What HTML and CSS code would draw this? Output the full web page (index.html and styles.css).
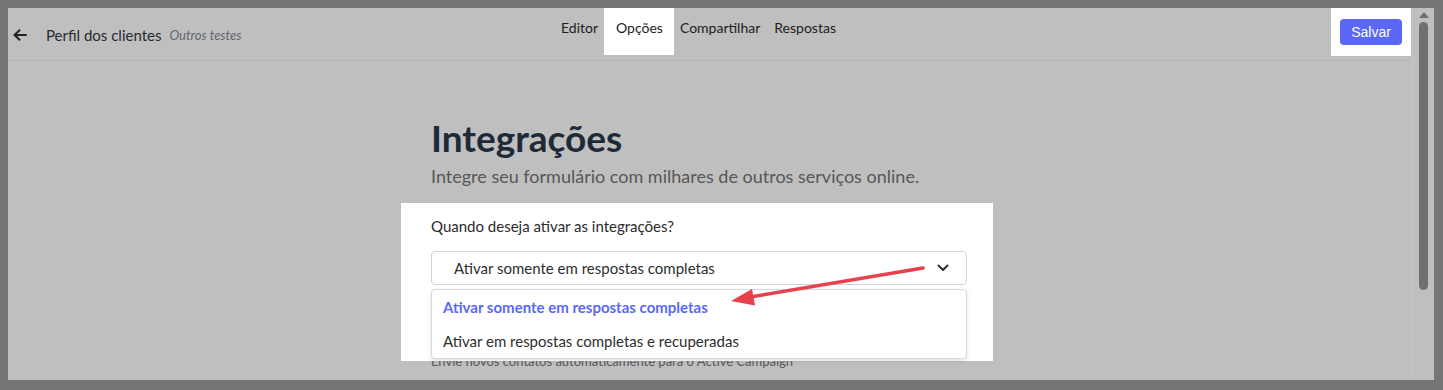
FILE: index.html
```html
<!DOCTYPE html>
<html lang="pt-BR">
<head>
    <meta charset="UTF-8">
    <meta name="viewport" content="width=device-width, initial-scale=1.0">
    <title>Integrações - Perfil dos clientes</title>
    <link rel="stylesheet" href="styles.css">
</head>
<body>
    <div class="frame">
        <div class="app">
            <header class="topbar">
                <div class="crumbs">
                    <svg class="back" width="14" height="12" viewBox="0 0 14 12">
                        <path d="M13 6H1.8M6.5 1.2L1.5 6l5 4.8" fill="none" stroke="#222" stroke-width="2" stroke-linecap="round" stroke-linejoin="round"/>
                    </svg>
                    <span class="form-name">Perfil dos clientes</span>
                    <span class="workspace">Outros testes</span>
                </div>
                <nav class="tabs">
                    <a class="tab">Editor</a>
                    <a class="tab active">Opções</a>
                    <a class="tab">Compartilhar</a>
                    <a class="tab">Respostas</a>
                </nav>
                <div class="actions">
                    <div class="save-spot">
                        <button class="save">Salvar</button>
                    </div>
                </div>
            </header>

            <main class="settings">
                <h1>Integrações</h1>
                <p class="lead">Integre seu formulário com milhares de outros serviços online.</p>

                <div class="spot">
                    <label class="field-label">Quando deseja ativar as integrações?</label>
                    <div class="select">
                        <span>Ativar somente em respostas completas</span>
                        <svg width="12" height="8" viewBox="0 0 12 8">
                            <path d="M1.5 1.5L6 6l4.5-4.5" fill="none" stroke="#333" stroke-width="2" stroke-linecap="round" stroke-linejoin="round"/>
                        </svg>
                    </div>
                    <ul class="menu">
                        <li class="selected">Ativar somente em respostas completas</li>
                        <li>Ativar em respostas completas e recuperadas</li>
                    </ul>
                    <!-- annotation arrow -->
                    <svg class="pointer" width="200" height="50" viewBox="0 0 200 50">
                        <path d="M195 8L22 37" fill="none" stroke="#e8414b" stroke-width="3.5" stroke-linecap="round"/>
                        <path d="M3 41L24 29L27 45.5Z" fill="#e8414b"/>
                    </svg>
                </div>

                <div class="integration-row">
                    <span>Envie novos contatos automaticamente para o Active Campaign</span>
                    <span class="row-btn"></span>
                </div>
            </main>
        </div>
        <div class="scrollbar">
            <span class="scroll-up"></span>
            <span class="thumb"></span>
        </div>
    </div>
</body>
</html>
```

FILE: styles.css
```css
body {
    margin: 0;
    font-family: 'Lato', 'Noto Sans', Arial, sans-serif;
    color: #262626;
    background-color: #757575;
}
.frame {
    display: flex;
    height: 372px;
    border-style: solid;
    border-color: #757575;
    border-width: 8px 9px 10px 8px;
    background-color: #bfbfbf;
    overflow: hidden;
}
.app {
    flex: 1;
    display: flex;
    flex-direction: column;
}

/* Top bar */
.topbar {
    display: grid;
    grid-template-columns: 1fr auto 1fr;
    height: 52px;
    border-bottom: 1px solid #b4b4b4;
}
.crumbs {
    display: flex;
    align-items: center;
    padding-left: 5px;
    padding-top: 1px;
}
.back {
    margin-right: 19px;
}
.form-name {
    font-size: 15px;
    color: #262b31;
    margin-right: 8px;
}
.workspace {
    font-size: 13px;
    font-style: italic;
    color: #5f6670;
}
.tabs {
    display: flex;
    align-items: flex-start;
    margin-right: 23px;
}
.tab {
    padding: 0 6px;
    height: 47px;
    line-height: 40px;
    font-size: 14px;
    color: #1c1c1c;
    cursor: pointer;
}
.tab.active {
    padding: 0 11px 0 12px;
    background-color: #fff;
}
.tab:last-child {
    margin-left: 2px;
}
.actions {
    display: flex;
    justify-content: flex-end;
    align-items: flex-start;
    padding-right: 1px;
}
.save-spot {
    padding: 11px 9px;
    background-color: #fff;
}
.save {
    display: block;
    margin: 0;
    padding: 0;
    width: 62px;
    height: 26px;
    border: none;
    border-radius: 4px;
    background-color: #5b67f6;
    color: #fff;
    font-family: 'Liberation Sans', Arial, sans-serif;
    font-size: 14px;
    cursor: pointer;
}

/* Content */
.settings {
    width: 536px;
    margin: 0 auto;
    padding: 54px 22px 0 0;
}
h1 {
    margin: 0;
    font-size: 37px;
    line-height: 46px;
    font-weight: 700;
    color: #1f2a38;
}
.lead {
    margin: 3px 0 0;
    font-size: 18px;
    line-height: 24px;
    color: #575757;
}
.spot {
    position: relative;
    z-index: 1;
    margin: 15px -26px 0 -30px;
    padding: 13px 26px 76px 30px;
    background-color: #fff;
}
.field-label {
    display: block;
    font-size: 15px;
    line-height: 20px;
    color: #2b2b2b;
    margin-bottom: 15px;
}
.select {
    display: flex;
    justify-content: space-between;
    align-items: center;
    height: 32px;
    padding: 0 17px 0 22px;
    border: 1px solid #cfd3d8;
    border-radius: 4px;
    font-size: 15px;
    color: #2e2e2e;
}
.menu {
    position: absolute;
    top: 86px;
    left: 30px;
    width: 534px;
    margin: 0;
    padding: 0;
    list-style: none;
    background: #fff;
    border: 1px solid #d5d8dc;
    border-radius: 4px;
    box-shadow: 0 2px 4px rgba(0, 0, 0, 0.12);
}
.menu li {
    height: 34px;
    line-height: 34px;
    padding-left: 11px;
    font-size: 15px;
    color: #2e2e2e;
}
.menu li.selected {
    color: #5b67f6;
    font-weight: 700;
}
.pointer {
    position: absolute;
    left: 327px;
    top: 57px;
}
.integration-row {
    display: flex;
    justify-content: space-between;
    margin-top: -9px;
    font-size: 13px;
    line-height: 18px;
    color: #585858;
}
.row-btn {
    width: 64px;
    height: 30px;
    margin-top: -21px;
    border: 1px solid #a9a9a9;
    border-radius: 4px;
    box-sizing: border-box;
}

/* Scrollbar */
.scrollbar {
    width: 21px;
    border-left: 1px solid #c6c6c6;
    display: flex;
    flex-direction: column;
    align-items: center;
}
.scroll-up {
    margin-top: 4px;
    width: 0;
    height: 0;
    border-left: 5px solid transparent;
    border-right: 5px solid transparent;
    border-bottom: 6px solid #6e6e6e;
}
.thumb {
    margin-top: 4px;
    width: 9px;
    height: 268px;
    border-radius: 5px;
    background-color: #707070;
}
```
